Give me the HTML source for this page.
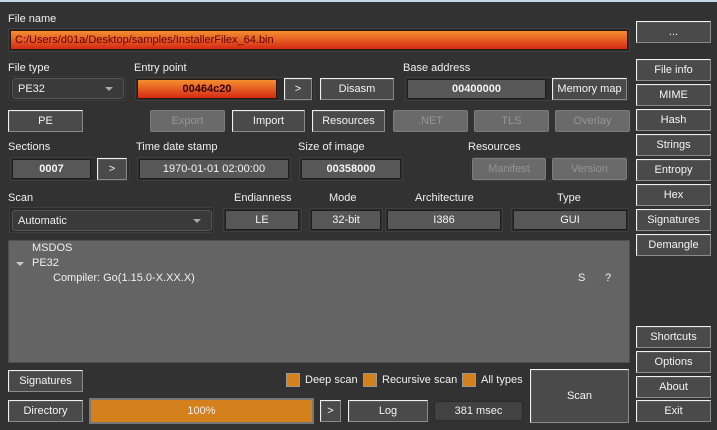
<!DOCTYPE html>
<html><head><meta charset="utf-8"><style>
*{box-sizing:border-box;margin:0;padding:0}
body{width:717px;height:430px;background:#323232;font-family:"Liberation Sans",sans-serif;font-size:11px;color:#f0f0f0;position:relative;overflow:hidden}
.a{position:absolute}
.lbl{position:absolute;font-size:11px;color:#f0f0f0;white-space:nowrap}
.btn{position:absolute;background:#4a4a4a;border:1px solid;border-color:#f0f0f0 #8a8a8a #8a8a8a #f0f0f0;box-shadow:inset 1px 1px 0 #5a5a5a;color:#f4f4f4;display:flex;align-items:center;justify-content:center;font-size:11px;white-space:nowrap}
.dis{position:absolute;background:#6a6a6a;border:1px solid #7c7c7c;border-radius:2px;color:#959595;display:flex;align-items:center;justify-content:center;font-size:11px}
.fld{position:absolute;background:#575757;border:1px solid #1e1e1e;color:#f4f4f4;display:flex;align-items:center;justify-content:center;font-size:11px;white-space:nowrap}
.frm{position:absolute;border:1px solid #3e3e3e;background:#2c2c2c;border-radius:2px}
.b{font-weight:bold}
.og{background:linear-gradient(#f58f30,#d52a14);border:1px solid #2a1a10}
.cb{position:absolute;width:14px;height:14px;background:#d4801c;border:1px solid #999}
.combo{position:absolute;background:#3a3a3a;border:1px solid #555;border-radius:3px;color:#f0f0f0;display:flex;align-items:center;padding-left:5px;font-size:11px}
.arr{position:absolute;right:10px;top:8px;width:0;height:0;border-left:4px solid transparent;border-right:4px solid transparent;border-top:4px solid #aaa}
</style></head><body>
<div class="a" style="left:0;top:0;width:717px;height:2px;background:#c5d5e5"></div>

<div class="lbl" style="left:8px;top:13px">File name</div>
<div class="frm" style="left:8px;top:28px;width:622px;height:24px"></div>
<div class="a og" style="left:10px;top:30px;width:618px;height:20px;color:#600;padding-left:4px;line-height:18px">C:/Users/d01a/Desktop/samples/InstallerFilex_64.bin</div>
<div class="btn" style="left:636px;top:21px;width:75px;height:22px">...</div>

<div class="lbl" style="left:8px;top:62px">File type</div>
<div class="frm" style="left:9px;top:76px;width:117px;height:25px"></div>
<div class="combo" style="left:12px;top:78px;width:112px;height:21px">PE32<div class="arr"></div></div>

<div class="lbl" style="left:134px;top:62px">Entry point</div>
<div class="frm" style="left:135px;top:77px;width:180px;height:24px"></div>
<div class="fld og b" style="left:137px;top:79px;width:140px;height:20px;color:#300">00464c20</div>
<div class="btn" style="left:284px;top:78px;width:28px;height:22px">&gt;</div>
<div class="btn" style="left:320px;top:78px;width:74px;height:22px">Disasm</div>

<div class="lbl" style="left:403px;top:62px">Base address</div>
<div class="frm" style="left:405px;top:77px;width:224px;height:24px"></div>
<div class="fld b" style="left:407px;top:79px;width:139px;height:20px">00400000</div>
<div class="btn" style="left:552px;top:78px;width:75px;height:22px">Memory map</div>

<div class="btn" style="left:636px;top:59px;width:75px;height:22px">File info</div>
<div class="btn" style="left:636px;top:84px;width:75px;height:22px">MIME</div>
<div class="btn" style="left:636px;top:109px;width:75px;height:22px">Hash</div>
<div class="btn" style="left:636px;top:134px;width:75px;height:22px">Strings</div>
<div class="btn" style="left:636px;top:159px;width:75px;height:22px">Entropy</div>
<div class="btn" style="left:636px;top:184px;width:75px;height:22px">Hex</div>
<div class="btn" style="left:636px;top:209px;width:75px;height:22px">Signatures</div>
<div class="btn" style="left:636px;top:234px;width:75px;height:22px">Demangle</div>
<div class="btn" style="left:636px;top:326px;width:75px;height:22px">Shortcuts</div>
<div class="btn" style="left:636px;top:351px;width:75px;height:22px">Options</div>
<div class="btn" style="left:636px;top:376px;width:75px;height:22px">About</div>
<div class="btn" style="left:636px;top:400px;width:75px;height:22px">Exit</div>

<div class="btn" style="left:8px;top:110px;width:75px;height:22px">PE</div>
<div class="dis" style="left:150px;top:110px;width:75px;height:22px">Export</div>
<div class="btn" style="left:232px;top:110px;width:73px;height:22px">Import</div>
<div class="btn" style="left:312px;top:110px;width:73px;height:22px">Resources</div>
<div class="dis" style="left:393px;top:110px;width:75px;height:22px">.NET</div>
<div class="dis" style="left:474px;top:110px;width:75px;height:22px">TLS</div>
<div class="dis" style="left:555px;top:110px;width:75px;height:22px">Overlay</div>

<div class="lbl" style="left:8px;top:141px">Sections</div>
<div class="frm" style="left:10px;top:157px;width:120px;height:24px"></div>
<div class="fld b" style="left:12px;top:159px;width:79px;height:20px">0007</div>
<div class="btn" style="left:97px;top:158px;width:30px;height:22px">&gt;</div>
<div class="lbl" style="left:136px;top:141px">Time date stamp</div>
<div class="frm" style="left:137px;top:157px;width:154px;height:24px"></div>
<div class="fld" style="left:139px;top:159px;width:150px;height:20px">1970-01-01 02:00:00</div>
<div class="lbl" style="left:298px;top:141px">Size of image</div>
<div class="frm" style="left:299px;top:157px;width:104px;height:24px"></div>
<div class="fld b" style="left:301px;top:159px;width:100px;height:20px">00358000</div>
<div class="lbl" style="left:468px;top:141px">Resources</div>
<div class="frm" style="left:470px;top:157px;width:159px;height:24px"></div>
<div class="dis" style="left:472px;top:158px;width:74px;height:22px">Manifest</div>
<div class="dis" style="left:552px;top:158px;width:75px;height:22px">Version</div>

<div class="lbl" style="left:8px;top:192px">Scan</div>
<div class="frm" style="left:9px;top:207px;width:205px;height:26px"></div>
<div class="combo" style="left:12px;top:210px;width:200px;height:21px">Automatic<div class="arr"></div></div>
<div class="lbl" style="left:234px;top:192px">Endianness</div>
<div class="frm" style="left:223px;top:208px;width:79px;height:24px"></div>
<div class="fld" style="left:225px;top:210px;width:74px;height:20px">LE</div>
<div class="lbl" style="left:329px;top:192px">Mode</div>
<div class="frm" style="left:309px;top:208px;width:74px;height:24px"></div>
<div class="fld" style="left:311px;top:210px;width:70px;height:20px">32-bit</div>
<div class="lbl" style="left:415px;top:192px">Architecture</div>
<div class="frm" style="left:385px;top:208px;width:118px;height:24px"></div>
<div class="fld" style="left:387px;top:210px;width:114px;height:20px">I386</div>
<div class="lbl" style="left:557px;top:192px">Type</div>
<div class="frm" style="left:511px;top:208px;width:118px;height:24px"></div>
<div class="fld" style="left:513px;top:210px;width:114px;height:20px">GUI</div>

<div class="a" style="left:8px;top:240px;width:622px;height:123px;background:#646464;border:1px solid #4e4e4e"></div>
<div class="lbl" style="left:32px;top:242px">MSDOS</div>
<div class="a" style="left:16px;top:262px;width:0;height:0;border-left:4px solid transparent;border-right:4px solid transparent;border-top:4px solid #ccc"></div>
<div class="lbl" style="left:32px;top:257px">PE32</div>
<div class="lbl" style="left:53px;top:272px">Compiler: Go(1.15.0-X.XX.X)</div>
<div class="lbl" style="left:578px;top:272px">S</div>
<div class="lbl" style="left:605px;top:272px">?</div>

<div class="btn" style="left:8px;top:370px;width:75px;height:22px">Signatures</div>
<div class="cb" style="left:286px;top:373px"></div><div class="lbl" style="left:305px;top:374px">Deep scan</div>
<div class="cb" style="left:363px;top:373px"></div><div class="lbl" style="left:382px;top:374px">Recursive scan</div>
<div class="cb" style="left:462px;top:373px"></div><div class="lbl" style="left:481px;top:374px">All types</div>
<div class="btn" style="left:530px;top:369px;width:99px;height:54px">Scan</div>

<div class="btn" style="left:8px;top:400px;width:75px;height:22px">Directory</div>
<div class="a" style="left:89px;top:398px;width:225px;height:26px;background:#d4801c;border:2px solid #777;display:flex;align-items:center;justify-content:center">100%</div>
<div class="btn" style="left:320px;top:400px;width:21px;height:22px">&gt;</div>
<div class="btn" style="left:348px;top:400px;width:80px;height:22px">Log</div>
<div class="a" style="left:434px;top:401px;width:89px;height:20px;background:#424242;border:1px solid #2a2a2a;border-radius:3px;display:flex;align-items:center;justify-content:center">381 msec</div>
</body></html>
